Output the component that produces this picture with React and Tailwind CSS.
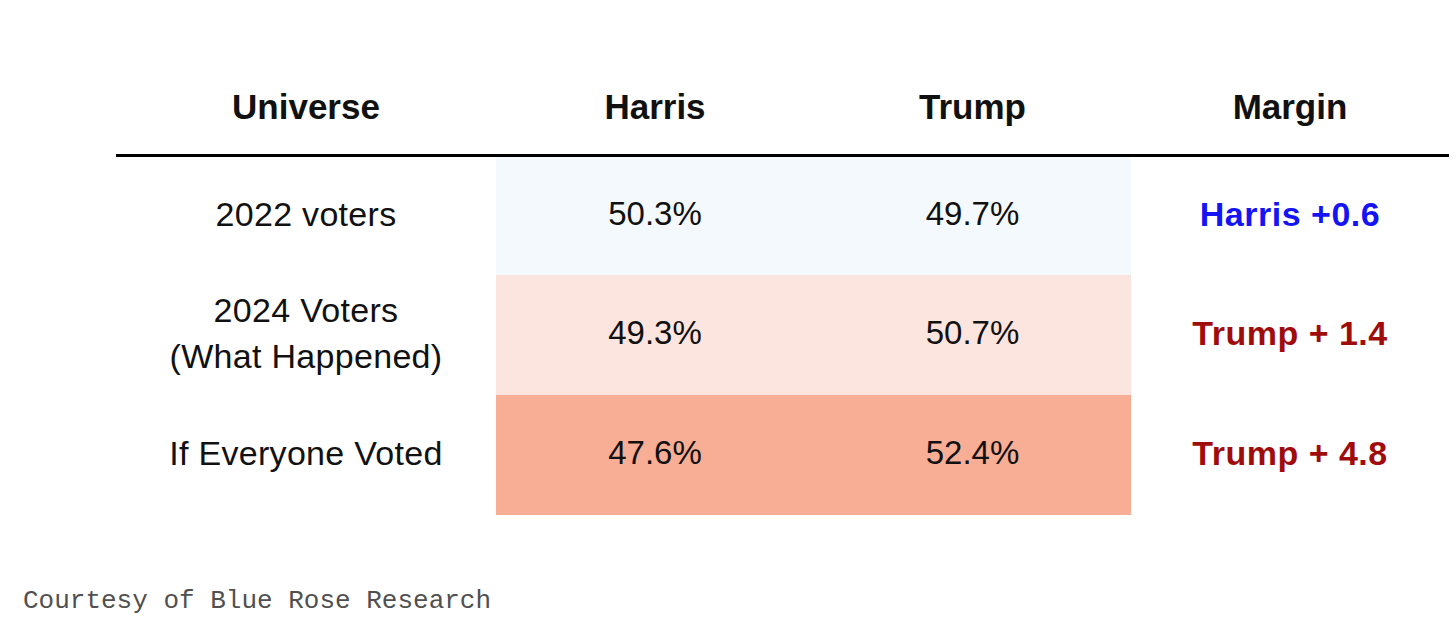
const rows = [
  {
    universe: ['2022 voters'],
    harris: '50.3%',
    trump: '49.7%',
    margin: 'Harris +0.6',
    marginColor: 'text-[#1414f5]',
    bg: 'bg-[#f3f9fc]'
  },
  {
    universe: ['2024 Voters', '(What Happened)'],
    harris: '49.3%',
    trump: '50.7%',
    margin: 'Trump + 1.4',
    marginColor: 'text-[#a00c0c]',
    bg: 'bg-[#fbe5de]'
  },
  {
    universe: ['If Everyone Voted'],
    harris: '47.6%',
    trump: '52.4%',
    margin: 'Trump + 4.8',
    marginColor: 'text-[#a00c0c]',
    bg: 'bg-[#f8ad95]'
  }
];

const heights = ['h-[118px]', 'h-[120px]', 'h-[120px]'];

export default function App() {
  return (
    <div className="min-h-[627px] w-[1456px] bg-white pt-[60px] font-['Liberation_Sans',Arial,sans-serif] text-[#111]">
      <div className="ml-[116px] w-[1333px]">
        <div className="grid h-[97px] grid-cols-[380px_318px_317px_318px] items-center border-b-[3px] border-black text-[35px] font-bold">
          <div className="text-center">Universe</div>
          <div className="text-center">Harris</div>
          <div className="text-center">Trump</div>
          <div className="text-center">Margin</div>
        </div>

        {rows.map((row, index) => (
          <div
            key={row.margin}
            className={`grid ${heights[index]} grid-cols-[380px_318px_317px_318px]`}
          >
            <div className="flex flex-col items-center justify-center pb-[5px] text-[34px] leading-[46px] tracking-[0.3px]">
              {row.universe.map((line) => (
                <span key={line}>{line}</span>
              ))}
            </div>
            <div className={`flex items-center justify-center pb-[4px] text-[33px] ${row.bg}`}>
              {row.harris}
            </div>
            <div className={`flex items-center justify-center pb-[4px] text-[33px] ${row.bg}`}>
              {row.trump}
            </div>
            <div
              className={`flex items-center justify-center pb-[4px] text-[34px] font-bold tracking-[0.5px] ${row.marginColor}`}
            >
              {row.margin}
            </div>
          </div>
        ))}
      </div>

      <p className="ml-[23px] mt-[70px] font-['Liberation_Mono',monospace] text-[26px] leading-[32px] text-[#505050]">
        Courtesy of Blue Rose Research
      </p>
    </div>
  );
}
